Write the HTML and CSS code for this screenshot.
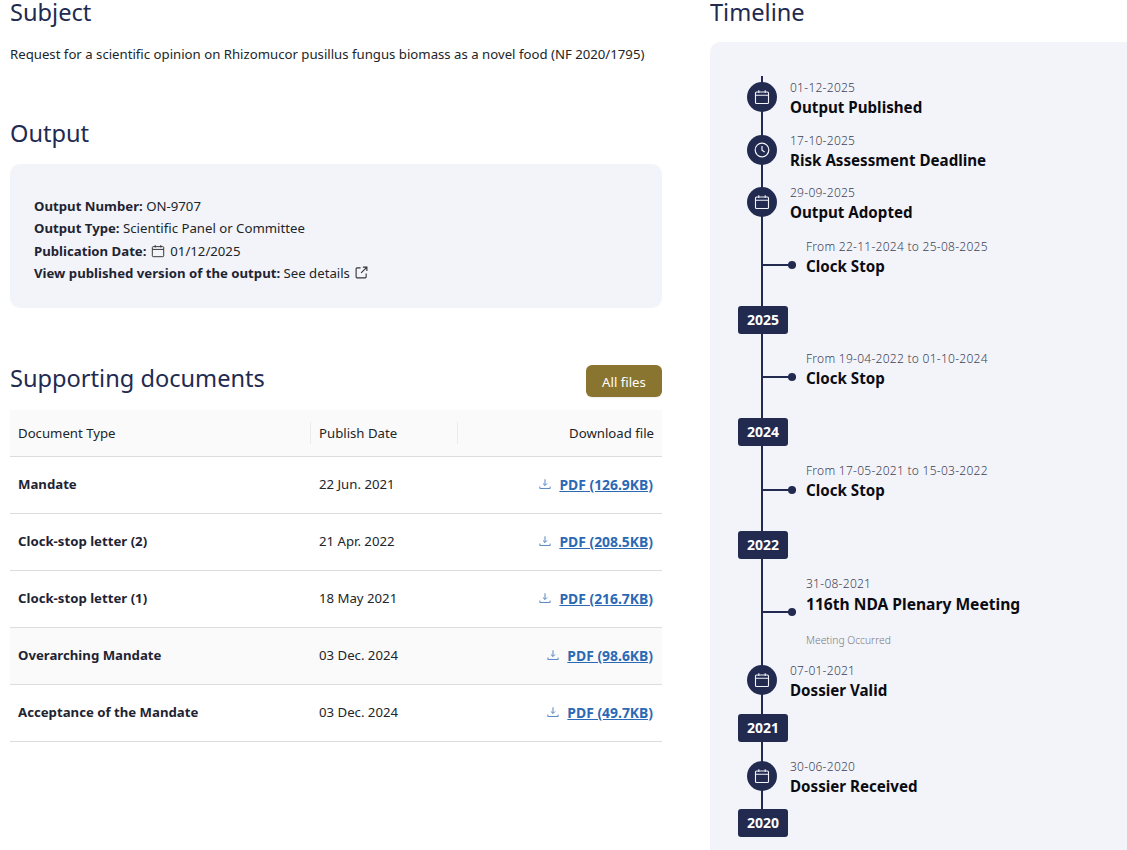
FILE: index.html
```html
<!DOCTYPE html>
<html lang="en">
<head>
<meta charset="utf-8">
<title>Output</title>
<link rel="stylesheet" href="styles.css">
</head>
<body>
<svg class="defs" width="0" height="0">
  <symbol id="cal" viewBox="0 0 16 16"><path d="M2.5 3h11a1 1 0 0 1 1 1v9.5a1 1 0 0 1-1 1h-11a1 1 0 0 1-1-1V4a1 1 0 0 1 1-1zM1.5 6.2h13M4.8 1.2V4M11.2 1.2V4" fill="none" stroke="currentColor" stroke-width="1.1"/></symbol>
  <symbol id="clock" viewBox="0 0 16 16"><circle cx="8" cy="8" r="6.8" fill="none" stroke="currentColor" stroke-width="1.2"/><path d="M8 4v4.3l2.6 1.7" fill="none" stroke="currentColor" stroke-width="1.2"/></symbol>
  <symbol id="dl" viewBox="0 0 14 14"><path d="M7 1.5v7M4.6 6.4 7 8.8l2.4-2.4M1 10v2.2h12V10" fill="none" stroke="currentColor" stroke-width="1.1"/></symbol>
  <symbol id="ext" viewBox="0 0 14 14"><path d="M6 2H2.2a1 1 0 0 0-1 1v8.8a1 1 0 0 0 1 1H11a1 1 0 0 0 1-1V8M8.5 1.2h4.3v4.3M12.6 1.4 6.6 7.4" fill="none" stroke="currentColor" stroke-width="1.2"/></symbol>
</svg>
<main class="page">
  <div class="left">
    <h2 class="heading">Subject</h2>
    <p class="subject">Request for a scientific opinion on Rhizomucor pusillus fungus biomass as a novel food (NF 2020/1795)</p>
    <h2 class="heading heading-output">Output</h2>
    <section class="card">
      <div class="line"><b>Output Number:</b> ON-9707</div>
      <div class="line"><b>Output Type:</b> Scientific Panel or Committee</div>
      <div class="line"><b>Publication Date:</b> <svg class="ic-cal"><use href="#cal"/></svg> 01/12/2025</div>
      <div class="line"><b>View published version of the output:</b> See details <svg class="ic-ext"><use href="#ext"/></svg></div>
    </section>
    <div class="docs-head">
      <h2 class="heading docs-title">Supporting documents</h2>
      <button class="btn">All files</button>
    </div>
    <div class="table">
      <div class="row head">
        <div class="cell">Document Type</div>
        <div class="cell sep">Publish Date</div>
        <div class="cell sep right">Download file</div>
      </div>
      <div class="row">
        <div class="cell name">Mandate</div><div class="cell when">22 Jun. 2021</div>
        <div class="cell right file"><svg class="ic-dl"><use href="#dl"/></svg><a class="pdf" href="#">PDF (126.9KB)</a></div>
      </div>
      <div class="row">
        <div class="cell name">Clock-stop letter (2)</div><div class="cell when">21 Apr. 2022</div>
        <div class="cell right file"><svg class="ic-dl"><use href="#dl"/></svg><a class="pdf" href="#">PDF (208.5KB)</a></div>
      </div>
      <div class="row">
        <div class="cell name">Clock-stop letter (1)</div><div class="cell when">18 May 2021</div>
        <div class="cell right file"><svg class="ic-dl"><use href="#dl"/></svg><a class="pdf" href="#">PDF (216.7KB)</a></div>
      </div>
      <div class="row shaded">
        <div class="cell name">Overarching Mandate</div><div class="cell when">03 Dec. 2024</div>
        <div class="cell right file"><svg class="ic-dl"><use href="#dl"/></svg><a class="pdf" href="#">PDF (98.6KB)</a></div>
      </div>
      <div class="row">
        <div class="cell name">Acceptance of the Mandate</div><div class="cell when">03 Dec. 2024</div>
        <div class="cell right file"><svg class="ic-dl"><use href="#dl"/></svg><a class="pdf" href="#">PDF (49.7KB)</a></div>
      </div>
    </div>
  </div>
  <div class="right-col">
    <h2 class="heading">Timeline</h2>
    <section class="panel">
      <div class="timeline">
        <div class="item h53"><span class="node"><svg class="ic-node"><use href="#cal"/></svg></span><div class="txt"><div class="date">01-12-2025</div><div class="title">Output Published</div></div></div>
        <div class="item h53"><span class="node"><svg class="ic-node"><use href="#clock"/></svg></span><div class="txt"><div class="date">17-10-2025</div><div class="title">Risk Assessment Deadline</div></div></div>
        <div class="item h53"><span class="node"><svg class="ic-node"><use href="#cal"/></svg></span><div class="txt"><div class="date">29-09-2025</div><div class="title">Output Adopted</div></div></div>
        <div class="item branch h72"><span class="stub"></span><div class="txt"><div class="date">From 22-11-2024 to 25-08-2025</div><div class="title">Clock Stop</div></div></div>
        <div class="year">2025</div>
        <div class="item branch h72 after-year"><span class="stub"></span><div class="txt"><div class="date">From 19-04-2022 to 01-10-2024</div><div class="title">Clock Stop</div></div></div>
        <div class="year">2024</div>
        <div class="item branch h72 after-year"><span class="stub"></span><div class="txt"><div class="date">From 17-05-2021 to 15-03-2022</div><div class="title">Clock Stop</div></div></div>
        <div class="year">2022</div>
        <div class="item branch meeting after-year"><span class="stub"></span><div class="txt"><div class="date">31-08-2021</div><div class="title big">116th NDA Plenary Meeting</div><div class="note">Meeting Occurred</div></div></div>
        <div class="item h55"><span class="node"><svg class="ic-node"><use href="#cal"/></svg></span><div class="txt"><div class="date">07-01-2021</div><div class="title">Dossier Valid</div></div></div>
        <div class="year">2021</div>
        <div class="item h54 after-small"><span class="node"><svg class="ic-node"><use href="#cal"/></svg></span><div class="txt"><div class="date">30-06-2020</div><div class="title">Dossier Received</div></div></div>
        <div class="year">2020</div>
      </div>
    </section>
  </div>
</main>
</body>
</html>
```
FILE: styles.css
```css
html, body { margin: 0; padding: 0; background: #fff; height: 850px; overflow: hidden; }
body { font-family: "Noto Sans", "Open Sans", sans-serif; font-size: 13.2px; color: #212529; }
.defs { position: absolute; }
.page { display: flex; align-items: flex-start; padding-left: 10px; gap: 48px; }
.left { width: 652px; flex: none; }
.right-col { flex: 1; min-width: 0; }
.heading { margin: 0; font-weight: 400; font-size: 23.6px; line-height: 24px; color: #222a50; }
.subject { margin: 18px 0 0; line-height: 24px; }
.heading-output { margin-top: 55px; }
.card { margin-top: 19px; height: 144px; box-sizing: border-box; padding: 31px 24px 0; background: #f3f4f9; border-radius: 10px; }
.line { height: 22.3px; line-height: 22.3px; white-space: nowrap; }
.line b { font-weight: 700; color: #1f2433; }
.ic-cal { width: 14px; height: 14px; vertical-align: -2px; margin: 0 2px 0 1px; color: #333; }
.ic-ext { width: 13px; height: 13px; vertical-align: -1px; margin-left: 2px; color: #333; }
.docs-head { display: flex; justify-content: space-between; align-items: flex-start; margin-top: 57px; height: 33px; }
.docs-title { margin-top: 1px; }
.btn { width: 76px; height: 32px; border: 0; border-radius: 6px; background: #8a7530; color: #fff; font: inherit; box-shadow: 0 1px 1px rgba(0,0,0,.06); padding: 1px 0 0; }
.table { margin-top: 12px; }
.row { display: grid; grid-template-columns: 301px 147px 204px; height: 57px; border-bottom: 1px solid #dcdcdc; box-sizing: border-box; align-items: center; }
.row.head { height: 47px; background: #fafafa; }
.row.shaded { background: #fafafa; }
.cell { padding: 0 8px; position: relative; white-space: nowrap; }
.name, .when { padding-bottom: 2px; }
.name { font-weight: 700; color: #1f2433; }
.right { text-align: right; }
.file { padding-right: 9px; padding-bottom: 2px; }
.sep::before { content: ""; position: absolute; left: -1px; top: -2px; height: 22px; width: 1px; background: #ececec; }
.ic-dl { width: 12px; height: 12px; vertical-align: 0; margin-right: 8px; color: #4d7fbe; }
.pdf { color: #2b69b4; font-size: 13.9px; font-weight: 700; text-decoration: underline; }
.panel { margin-top: 18px; height: 900px; background: #f3f4f9; border-radius: 10px 0 0 0; padding: 34px 0 0 28px; }
.timeline { position: relative; width: 380px; }
.timeline::before { content: ""; position: absolute; left: 23px; top: 0; bottom: 0; width: 2px; background: #222a50; }
.item { position: relative; display: flex; box-sizing: border-box; padding-top: 4px; }
.h53 { height: 52.7px; }
.h72 { height: 72px; }
.h55 { height: 54.7px; }
.h54 { height: 54px; }
.node { position: relative; flex: none; margin: 2px 0 0 9px; width: 30px; height: 30px; border-radius: 50%; background: #222a50; color: #f3f4f9; display: flex; align-items: center; justify-content: center; }
.ic-node { width: 16px; height: 16px; }
.txt { margin-left: 13px; }
.date { font-size: 12px; font-weight: 300; line-height: 15px; color: #3d4254; letter-spacing: .27px; }
.title { font-size: 15.15px; font-weight: 700; line-height: 24px; color: #0b0b12; }
.title.big { font-size: 15.6px; margin-top: 1px; }
.branch { padding-left: 68px; padding-top: 4.5px; }
.branch .txt { margin-left: 0; }
.stub { position: absolute; left: 24px; top: 30px; width: 34px; height: 2px; background: #222a50; }
.stub::after { content: ""; position: absolute; right: 0; top: -3px; width: 8px; height: 8px; border-radius: 50%; background: #222a50; }
.meeting { height: 88px; }
.meeting .stub { top: 40px; }
.note { margin-top: 17px; font-size: 10.3px; font-weight: 300; line-height: 14px; color: #777a80; }
.year { position: relative; width: 50px; height: 28px; border-radius: 3px; background: #222a50; color: #fff; font-weight: 700; font-size: 14px; line-height: 28px; text-align: center; }
.after-year { margin-top: 12.4px; }
.after-small { margin-top: 13px; }
```
